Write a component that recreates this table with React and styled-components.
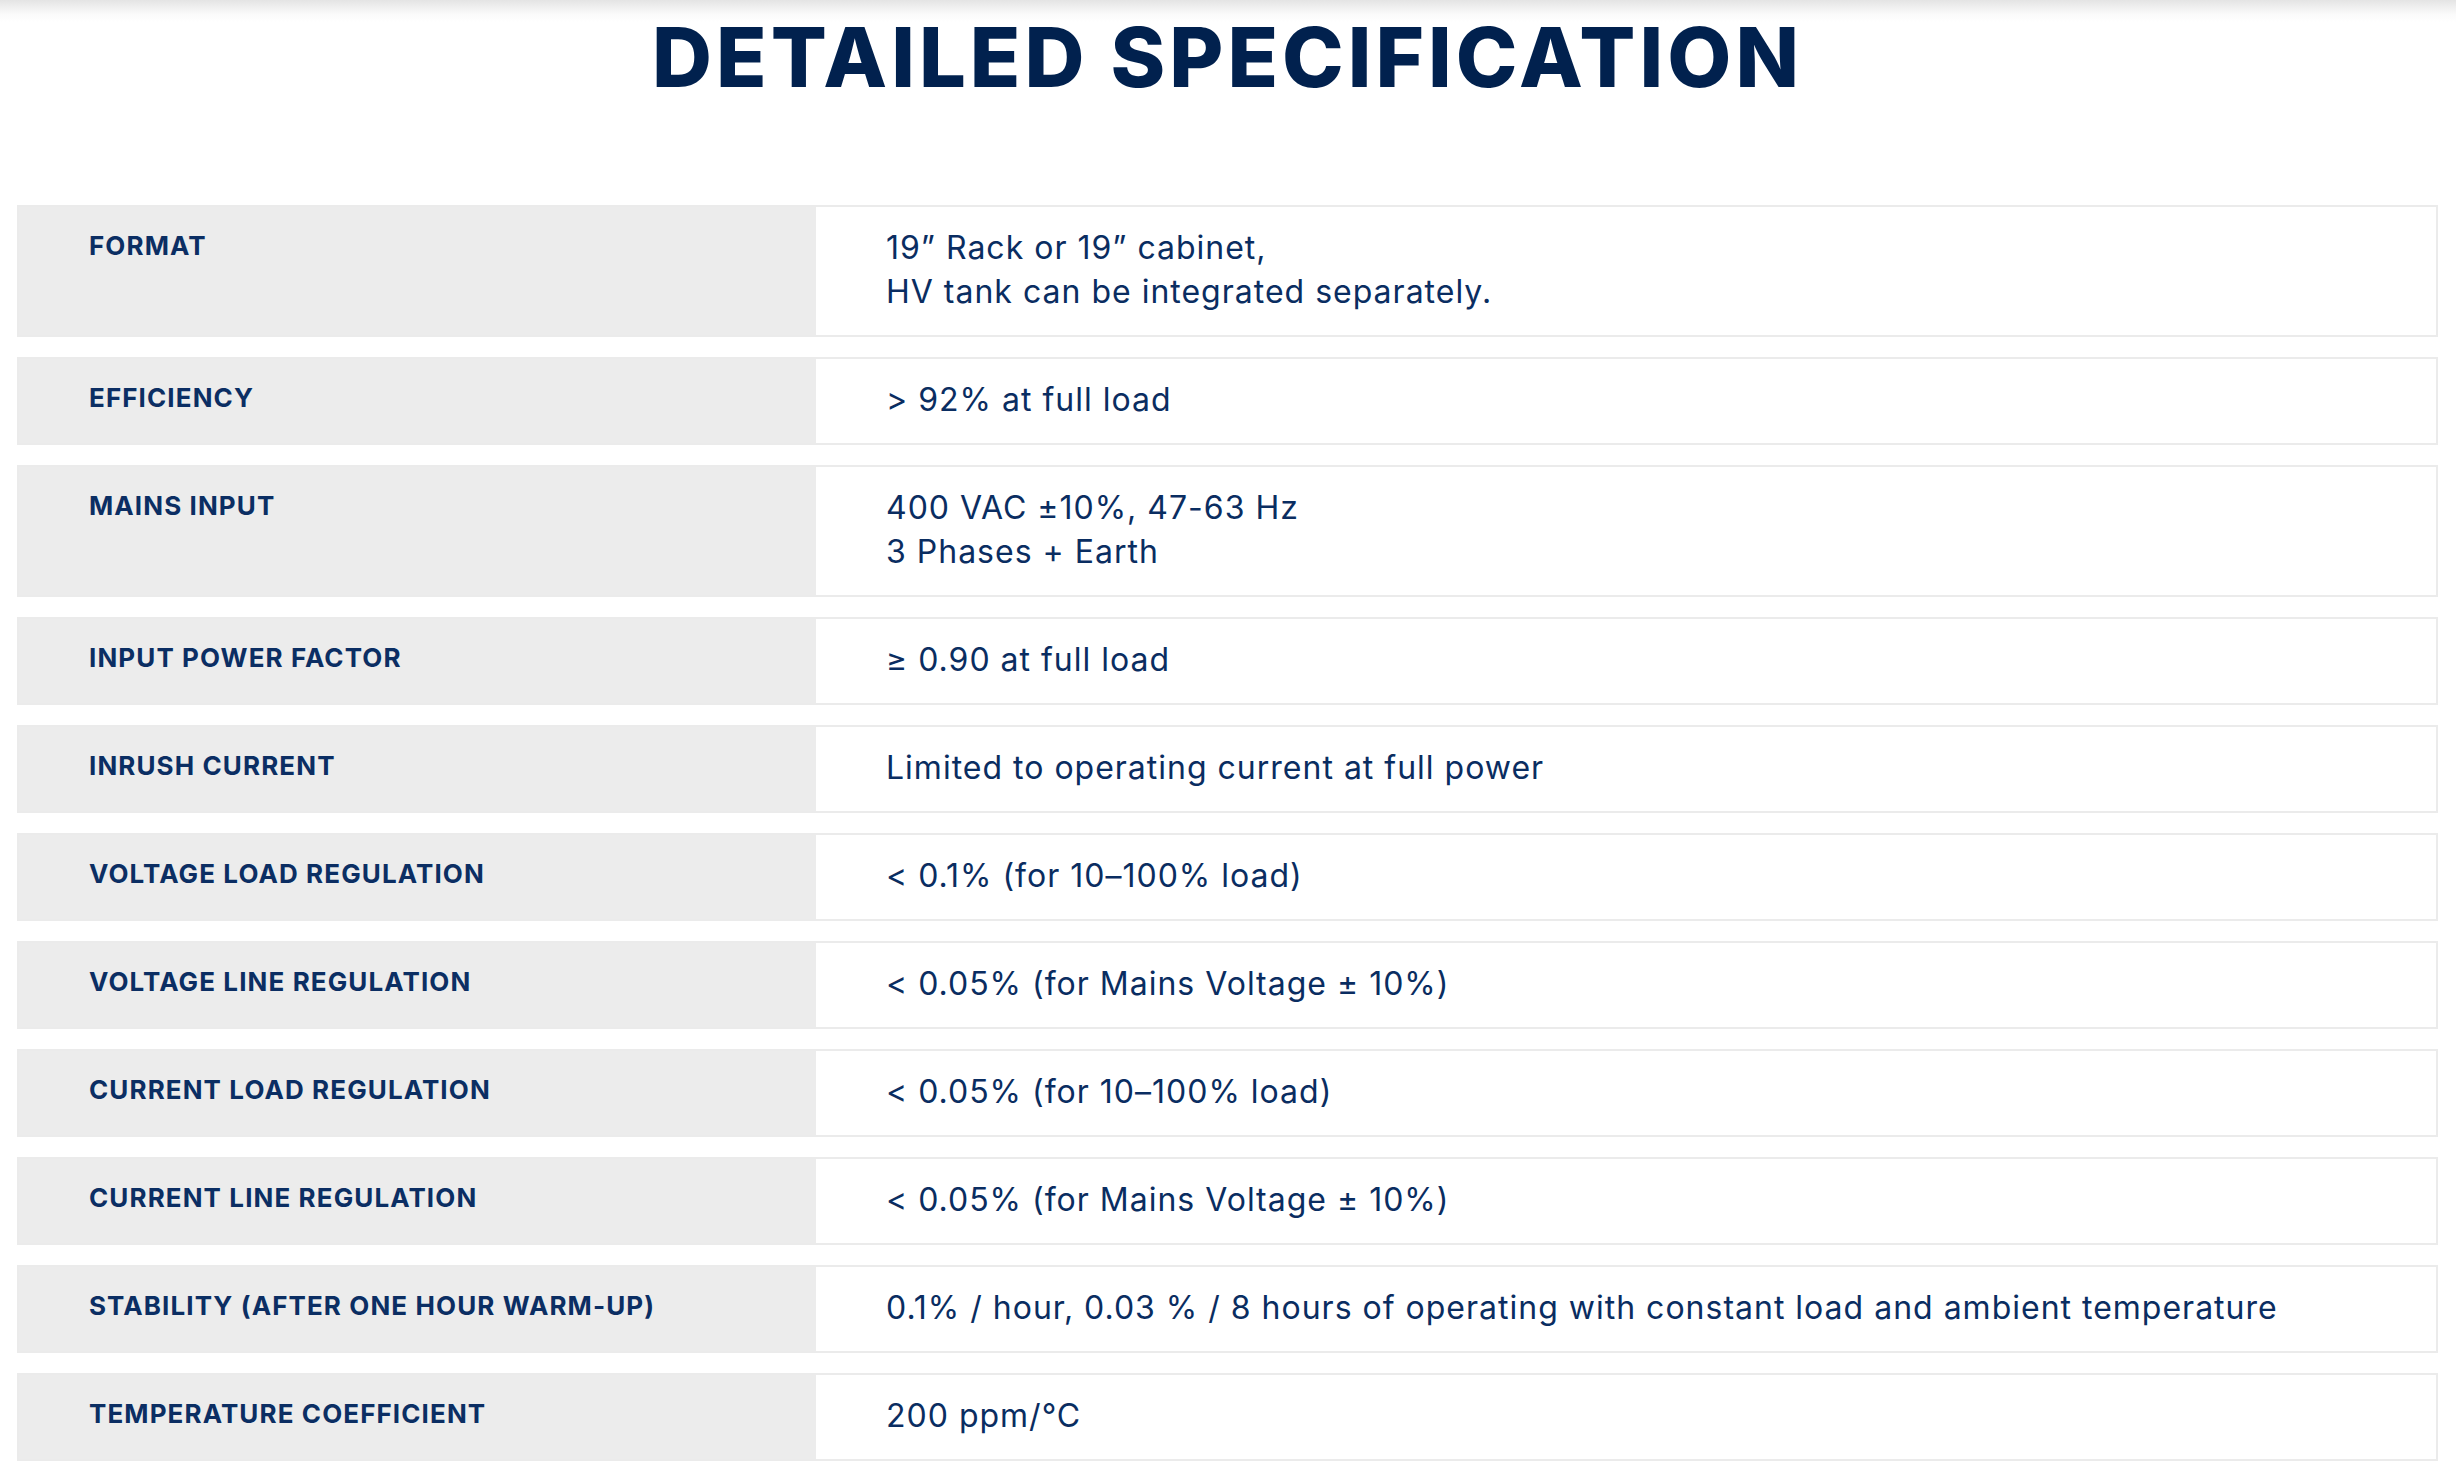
import React from 'react'
import styled, { createGlobalStyle } from 'styled-components'

const specs = [
  { label: 'FORMAT', value: ['19” Rack or 19” cabinet,', 'HV tank can be integrated separately.'] },
  { label: 'EFFICIENCY', value: ['> 92% at full load'] },
  { label: 'MAINS INPUT', value: ['400 VAC ±10%, 47-63 Hz', '3 Phases + Earth'] },
  { label: 'INPUT POWER FACTOR', value: ['≥ 0.90 at full load'] },
  { label: 'INRUSH CURRENT', value: ['Limited to operating current at full power'] },
  { label: 'VOLTAGE LOAD REGULATION', value: ['< 0.1% (for 10–100% load)'] },
  { label: 'VOLTAGE LINE REGULATION', value: ['< 0.05% (for Mains Voltage ± 10%)'] },
  { label: 'CURRENT LOAD REGULATION', value: ['< 0.05% (for 10–100% load)'] },
  { label: 'CURRENT LINE REGULATION', value: ['< 0.05% (for Mains Voltage ± 10%)'] },
  { label: 'STABILITY (AFTER ONE HOUR WARM-UP)', value: ['0.1% / hour, 0.03 % / 8 hours of operating with constant load and ambient temperature'] },
  { label: 'TEMPERATURE COEFFICIENT', value: ['200 ppm/°C'] },
]

export default function App() {
  return (
    <Page>
      <GlobalStyle />
      <Title>DETAILED SPECIFICATION</Title>
      <SpecTable>
        {specs.map(spec => (
          <SpecRow key={spec.label}>
            <SpecLabel>{spec.label}</SpecLabel>
            <SpecValue>
              {spec.value.map(line => <div key={line}>{line}</div>)}
            </SpecValue>
          </SpecRow>
        ))}
      </SpecTable>
    </Page>
  )
}

const GlobalStyle = createGlobalStyle`
  body {
    margin: 0;
    background: #fff;
    font-family: Inter, "Noto Sans", sans-serif;
  }
`

const Page = styled.div`
  min-height: 1466px;
  padding: 0 18px 0 17px;
  box-sizing: border-box;
  background: linear-gradient(#e4e4e4, #fafafa 14px, #fff 22px) no-repeat;
  background-size: 100% 22px;
`

const Title = styled.h1`
  margin: 0;
  padding-top: 14px;
  text-align: center;
  font-size: 83px;
  line-height: 86px;
  font-weight: 800;
  letter-spacing: 4px;
  color: #01214e;
`

const SpecTable = styled.div`
  display: flex;
  flex-direction: column;
  gap: 20px;
  margin-top: 105px;
`

const SpecRow = styled.div`
  display: grid;
  grid-template-columns: 797px 1fr;
  border: 2px solid #ebebeb;
  background: #fff;
`

const SpecLabel = styled.div`
  background: #ececec;
  padding: 17px 20px 0 70px;
  font-size: 26px;
  line-height: 44px;
  font-weight: 700;
  letter-spacing: 1.1px;
  color: #0b2e63;
`

const SpecValue = styled.div`
  padding: 19px 40px 21px 70px;
  font-size: 32px;
  line-height: 44px;
  font-weight: 400;
  letter-spacing: 1px;
  color: #0a2d61;
`
